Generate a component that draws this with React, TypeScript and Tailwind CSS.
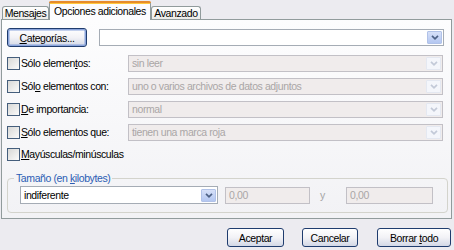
import React from "react"

const font = "font-['Liberation_Sans',Arial,sans-serif] text-[10.5px] tracking-[-0.4px] leading-none text-black"

function Chevron({ disabled }: { disabled?: boolean }) {
  return (
    <svg width="8" height="5" viewBox="0 0 8 5">
      <path
        d="M1 0.8 L4 3.8 L7 0.8"
        fill="none"
        stroke={disabled ? "#c3cad8" : "#4d6185"}
        strokeWidth="1.7"
      />
    </svg>
  )
}

function Combo({
  width,
  text,
  disabled,
  tall,
}: {
  width: string
  text?: string
  disabled?: boolean
  tall?: boolean
}) {
  return (
    <div
      className={`${width} ${tall ? "h-[18px]" : "h-[17px]"} flex items-center border ${
        disabled ? "border-[#c2c0c6] bg-[#f0ecec] text-[#aaa6a6]" : "border-[#a5acb5] bg-white text-black"
      }`}
    >
      <span className="flex-1 pl-[3px] truncate">{text}</span>
      <div
        className={`w-[15px] h-[13px] mr-[1px] flex items-center justify-center rounded-[1px] border ${
          disabled
            ? "border-[#e4e8f1] bg-[#f4f6fb]"
            : "border-[#b1c2e8] bg-gradient-to-b from-[#d6e0f8] to-[#b4c7f1]"
        }`}
      >
        <Chevron disabled={disabled} />
      </div>
    </div>
  )
}

function Checkbox() {
  return (
    <div className="w-[13px] h-[13px] border border-[#455e7c] bg-gradient-to-br from-[#d8d8d6] to-[#fbfbfb]" />
  )
}

function Row({ label, value }: { label: React.ReactNode; value: string }) {
  return (
    <div className="flex items-center h-[17px] mt-[6px]">
      <div className="ml-[5px]">
        <Checkbox />
      </div>
      <div className="w-[108px] pl-[1px]">{label}</div>
      <Combo width="w-[315px]" text={value} disabled />
    </div>
  )
}

function Button({
  width,
  children,
  focused,
}: {
  width: string
  children: React.ReactNode
  focused?: boolean
}) {
  return (
    <div
      className={`${width} h-[19px] flex items-center justify-center pt-[1px] rounded-[3px] border border-[#1f3c6e] bg-gradient-to-b from-[#ffffff] via-[#f2f2f6] to-[#d3d8e6] ${
        focused ? "shadow-[inset_0_0_0_1.5px_#8aa4dc]" : ""
      }`}
    >
      {children}
    </div>
  )
}

function Tab({
  width,
  label,
  selected,
}: {
  width: string
  label: string
  selected?: boolean
}) {
  if (selected) {
    return (
      <div
        className={`${width} h-[19px] -mb-px relative flex justify-center pt-[5px] border-x border-[#919b9c] bg-[#fcfcfe] rounded-t-[3px]`}
      >
        <div className="absolute left-[-1px] right-[-1px] top-0 h-[2px] rounded-t-[3px] bg-[#e68b2c]" />
        <div className="absolute left-0 right-0 top-[2px] h-[1px] bg-[#ffc83c]" />
        <span className="whitespace-nowrap leading-[11px]">{label}</span>
      </div>
    )
  }
  return (
    <div
      className={`${width} h-[13px] flex justify-center pt-[1px] border-t border-x border-[#919b9c] rounded-t-[3px] bg-gradient-to-b from-[#ffffff] to-[#ecebe8]`}
    >
      <span className="whitespace-nowrap leading-[11px]">{label}</span>
    </div>
  )
}

export default function App() {
  return (
    <div className={`w-[454px] h-[250px] bg-[#ecebf0] pt-[1px] overflow-hidden ${font}`}>
      <div className="relative z-10 flex items-end pl-[2px] h-[18px]">
        <Tab width="w-[47px]" label="Mensajes" />
        <Tab width="w-[102px]" label="Opciones adicionales" selected />
        <Tab width="w-[50px]" label="Avanzado" />
      </div>

      <div className="relative z-0 ml-[1px] w-[451px] h-[200px] border border-[#919b9c] bg-gradient-to-b from-[#fdfdfe] to-[#f2f2f5]">
        <div className="flex items-center mt-[8px]">
          <div className="ml-[5px]">
            <Button width="w-[80px]" focused>
              <span>
                <u>C</u>ategorías...
              </span>
            </Button>
          </div>
          <div className="ml-[12px]">
            <Combo width="w-[345px]" />
          </div>
        </div>

        <div className="h-[2px]" />
        <Row
          label={
            <span>
              Sólo elemen<u>t</u>os:
            </span>
          }
          value="sin leer"
        />
        <Row
          label={
            <span>
              Sól<u>o</u> elementos con:
            </span>
          }
          value="uno o varios archivos de datos adjuntos"
        />
        <Row
          label={
            <span>
              <u>D</u>e importancia:
            </span>
          }
          value="normal"
        />
        <Row
          label={
            <span>
              <u>S</u>ólo elementos que:
            </span>
          }
          value="tienen una marca roja"
        />

        <div className="flex items-center h-[13px] mt-[7px]">
          <div className="ml-[5px]">
            <Checkbox />
          </div>
          <span className="pl-[1px]">
            <u>M</u>ayúsculas/minúsculas
          </span>
        </div>

        <div className="relative ml-[5px] mt-[17px] w-[441px] h-[35px] border border-[#d3d3cc] rounded-[4px] pl-[12px] pt-[7px]">
          <span className="absolute left-[6px] top-[-6px] px-[2px] bg-[#f4f4f6] text-[#2a5cb4]">
            Tamaño (en <u>k</u>ilobytes)
          </span>
          <div className="flex items-center">
            <Combo width="w-[198px]" text="indiferente" tall />
            <div className="ml-[7px] w-[85px] h-[17px] flex items-center pl-[3px] border border-[#c2c0c6] bg-[#f0ecec] text-[#aaa6a6]">
              0,00
            </div>
            <span className="w-[36px] pl-[10px] text-[#a5a5a5]">y</span>
            <div className="w-[87px] h-[17px] flex items-center pl-[3px] border border-[#c2c0c6] bg-[#f0ecec] text-[#aaa6a6]">
              0,00
            </div>
          </div>
        </div>
      </div>

      <div className="flex justify-end pr-[3px] mt-[9px]">
        <Button width="w-[57px]">Aceptar</Button>
        <div className="ml-[18px]">
          <Button width="w-[56px]">Cancelar</Button>
        </div>
        <div className="ml-[19px]">
          <Button width="w-[74px]">
            <span>
              Borrar <u>t</u>odo
            </span>
          </Button>
        </div>
      </div>
    </div>
  )
}
